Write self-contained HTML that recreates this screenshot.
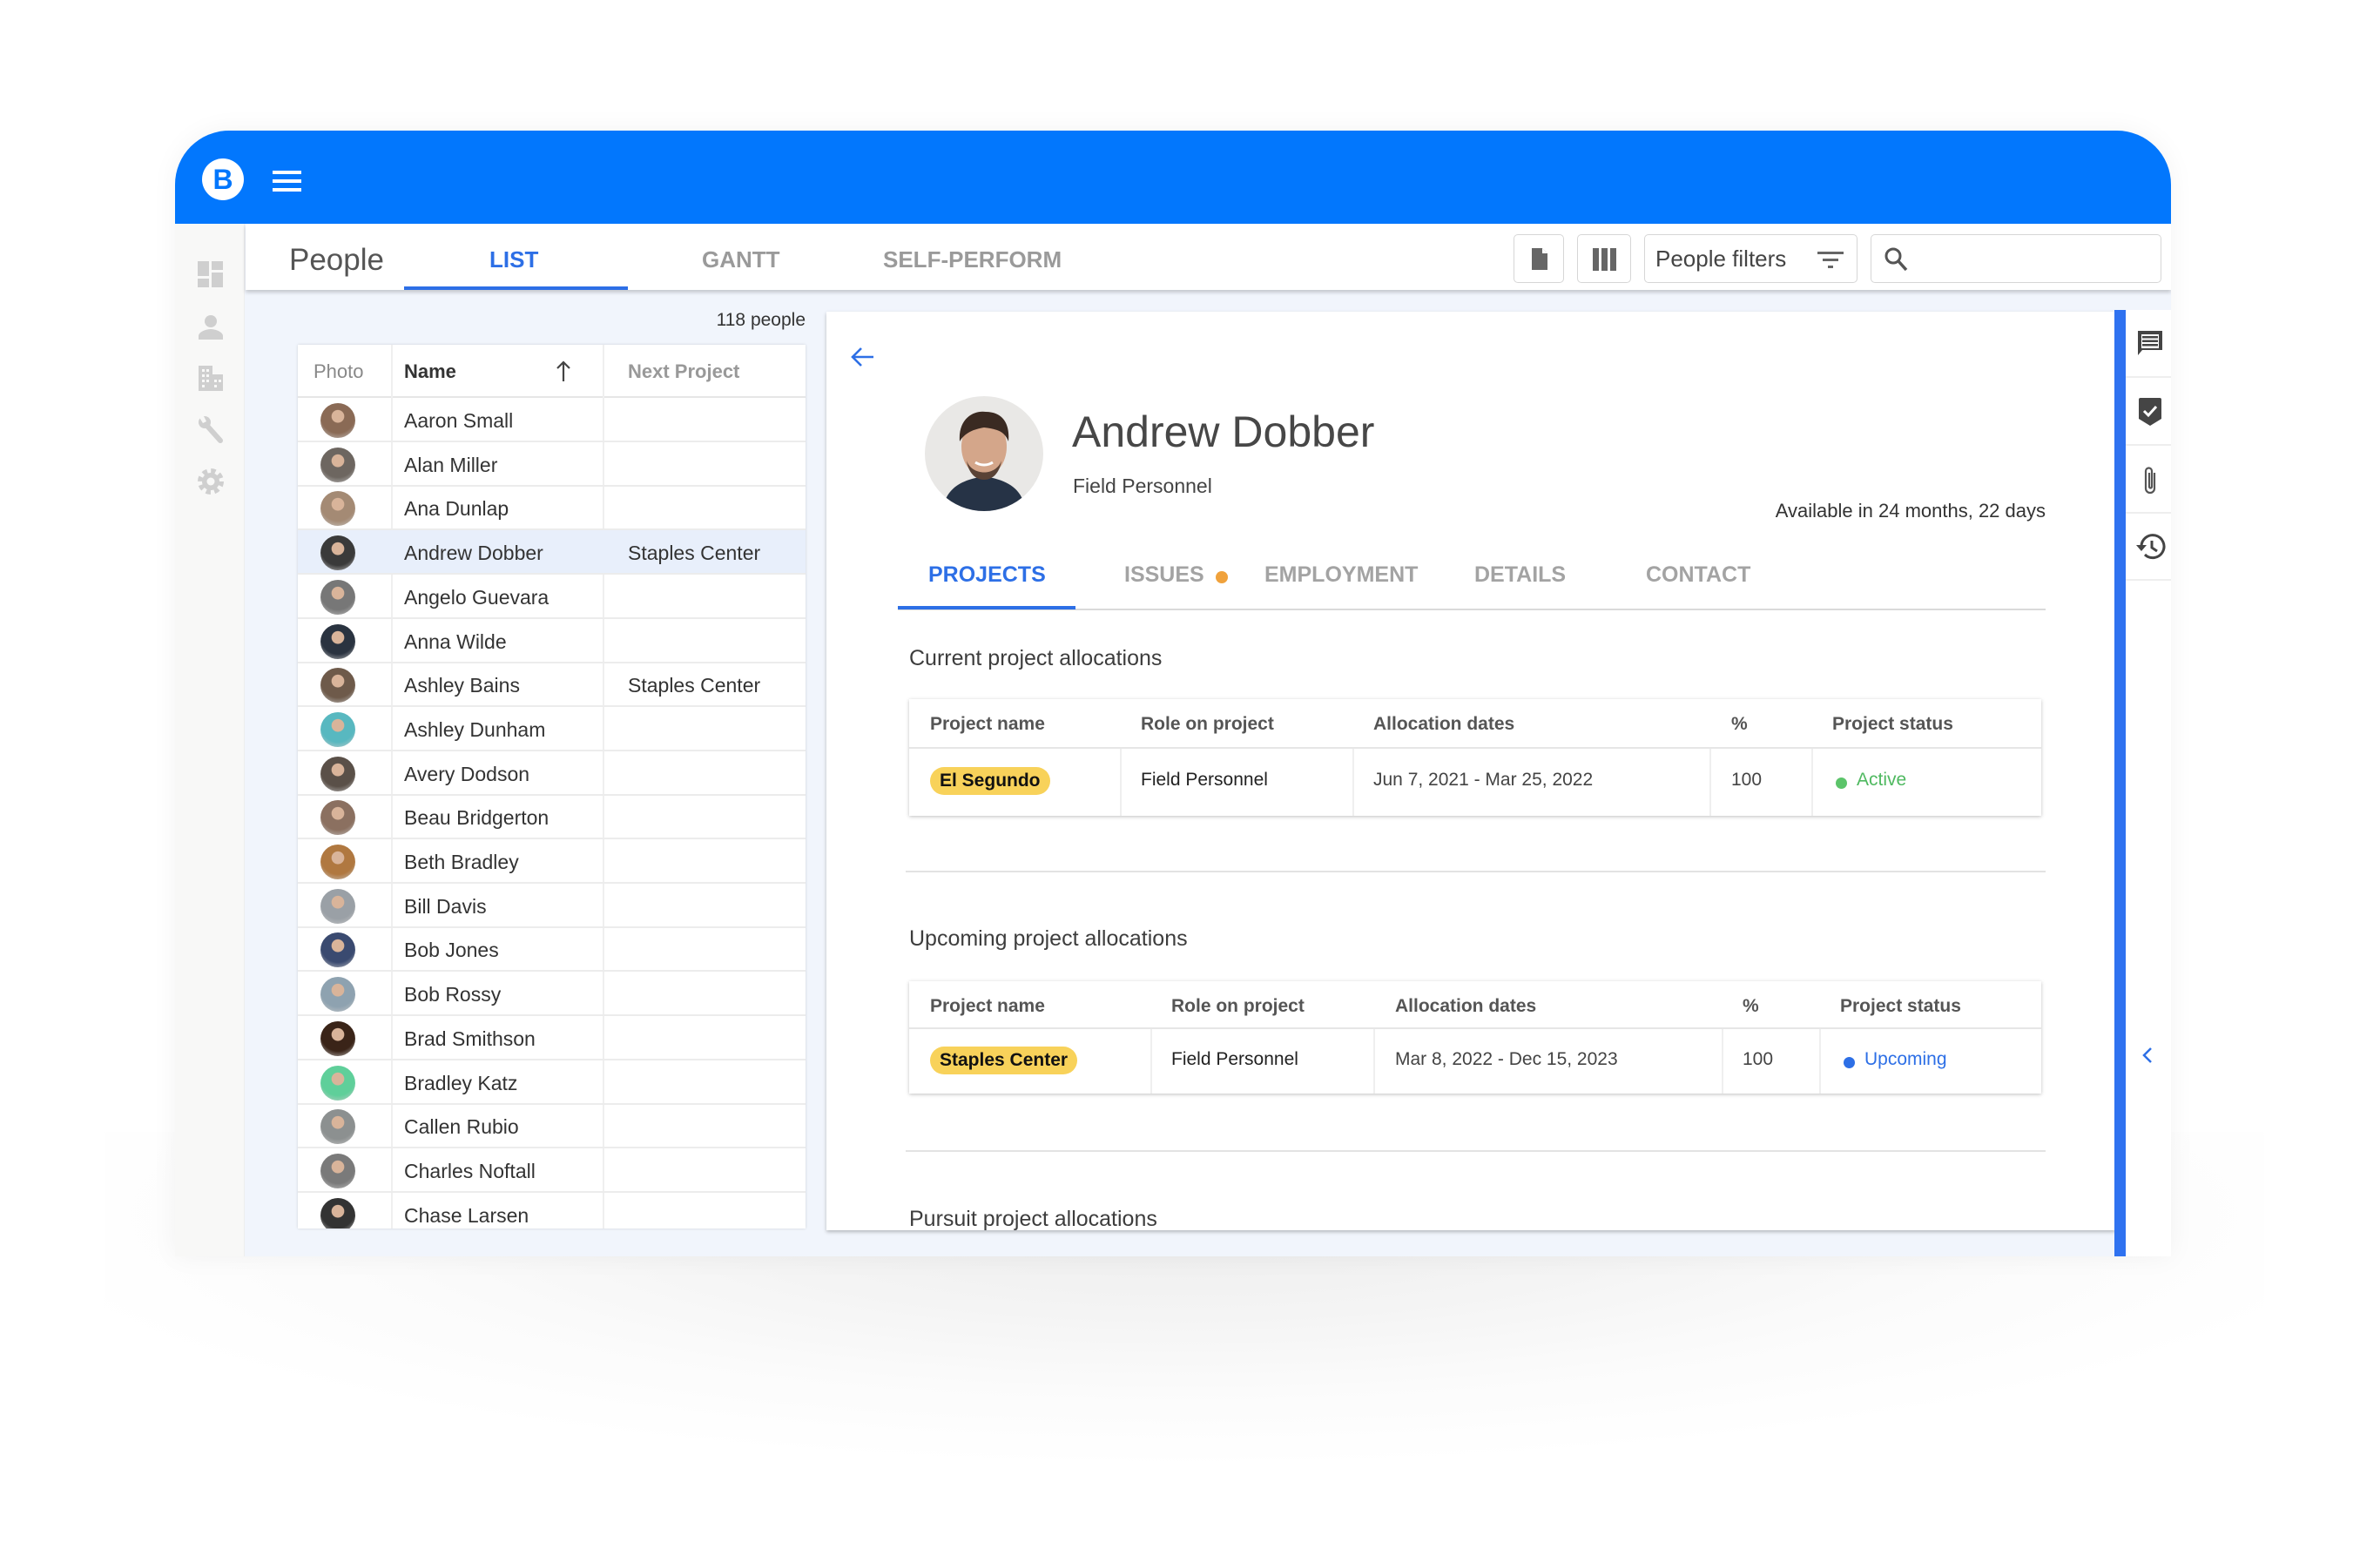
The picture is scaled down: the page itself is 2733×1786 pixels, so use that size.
<!DOCTYPE html>
<html><head><meta charset="utf-8"><style>
*{box-sizing:border-box;margin:0;padding:0}
body{width:2733px;height:1786px;background:#fff;position:relative;overflow:hidden;font-family:"Liberation Sans",Arial,sans-serif;color:#3d3d3d}
.a{position:absolute}
.shadow{left:120px;top:1300px;width:2480px;height:480px;background:radial-gradient(ellipse 55% 60% at 50% 20%,#ededed 0%,#f4f4f4 40%,#fbfbfb 70%,#fff 100%)}
.frame{left:201px;top:150px;width:2292px;height:1293px;background:#f1f5fc;overflow:hidden;border-radius:62px 62px 0 0;box-shadow:0 0 30px rgba(0,0,0,.05)}
.hdr{left:0;top:0;width:100%;height:107px;background:#0277fd}
.side{left:0;top:107px;width:80px;height:1186px;background:#f8f8f7;border-right:1px solid #eee}
.topbar{left:81px;top:107px;width:2211px;height:76px;background:#fff;box-shadow:0 3px 4px rgba(0,0,0,.18)}
.tab{position:absolute;font-size:26px;font-weight:bold;color:#9a9a9a;top:26px}
.btn{position:absolute;top:12px;height:56px;border:1px solid #d6d6d6;border-radius:5px;background:#fff}
.tbl{left:141px;top:246px;width:583px;height:1015px;background:#fff;box-shadow:0 0 3px rgba(0,0,0,.15);overflow:hidden}
.row{position:absolute;left:0;width:583px;height:51px;border-bottom:2px solid #ececec;font-size:23px;color:#333}
.row .n{position:absolute;left:122px;top:13px}
.row .p{position:absolute;left:379px;top:13px}
.av{position:absolute;left:26px;top:6px;width:40px;height:40px;border-radius:50%}
.vl{position:absolute;top:0;width:2px;height:100%;background:#efefef}
.card{left:748px;top:208px;width:1480px;height:1055px;background:#fff;box-shadow:0 2px 4px rgba(0,0,0,.25)}
.ptab{position:absolute;top:288px;font-size:25px;font-weight:bold;color:#a3a3a3}
.sec{position:absolute;left:95px;font-size:25px;color:#3d3d3d}
.pt{position:absolute;background:#fff;box-shadow:0 1px 4px rgba(0,0,0,.25);font-size:21px;width:1300px}
.pt .h{position:absolute;top:17px;font-weight:bold;color:#555}
.pt .c{position:absolute;color:#222}
.chip{position:absolute;background:#f8d25a;border-radius:16px;padding:4px 11px;font-weight:bold;color:#111}
.hr{position:absolute;left:91px;width:1309px;height:2px;background:#e3e3e3}
</style></head><body>
<div class="a shadow"></div>
<div class="a frame">
 <div class="a hdr">
  <div class="a" style="left:31px;top:32px;width:48px;height:48px;border-radius:50%;background:#fff;color:#0277fd;font-weight:bold;font-size:32px;text-align:center;line-height:48px">B</div>
  <div class="a" style="left:112px;top:46px;width:33px;height:4px;background:#fff;box-shadow:0 10px 0 #fff,0 20px 0 #fff"></div>
 </div>
 <div class="a side">
  <svg class="a" style="left:25px;top:42px" width="32" height="280" viewBox="0 0 32 280" fill="#cfcfcf">
   <rect x="1" y="1" width="13" height="17"/><rect x="17" y="1" width="13" height="10"/><rect x="1" y="21" width="13" height="10"/><rect x="17" y="14" width="13" height="17"/>
   <circle cx="16" cy="70" r="7"/><path d="M2 91v-4c0-5 9-8 14-8s14 3 14 8v4z"/>
   <path d="M2 121h16v10h12v19H2z"/><g fill="#f8f8f7"><rect x="6" y="125" width="3" height="3"/><rect x="11" y="125" width="3" height="3"/><rect x="6" y="131" width="3" height="3"/><rect x="11" y="131" width="3" height="3"/><rect x="6" y="137" width="3" height="3"/><rect x="11" y="137" width="3" height="3"/><rect x="6" y="143" width="3" height="3"/><rect x="20" y="137" width="3" height="3"/><rect x="25" y="137" width="3" height="3"/><rect x="20" y="143" width="3" height="3"/></g>
   <path d="M10 188L27 207" stroke="#cfcfcf" stroke-width="6" stroke-linecap="round"/>
   <circle cx="9" cy="186" r="7"/><path d="M2 179l6 0 3 6-4 2z" fill="#f8f8f7"/>
   <circle cx="16" cy="254" r="12" fill="none" stroke="#cfcfcf" stroke-width="6" stroke-dasharray="5.2 4.2"/>
   <circle cx="16" cy="254" r="10"/><circle cx="16" cy="254" r="4.5" fill="#f8f8f7"/>
  </svg>
 </div>
 <div class="a topbar">
  <div class="a" style="left:50px;top:22px;font-size:35px;color:#555">People</div>
  <div class="tab" style="left:280px;color:#2d6fe6">LIST</div>
  <div class="a" style="left:182px;top:72px;width:257px;height:4px;background:#2d6fe6"></div>
  <div class="tab" style="left:524px">GANTT</div>
  <div class="tab" style="left:732px">SELF-PERFORM</div>
  <div class="btn" style="left:1456px;width:58px"><svg class="a" style="left:19px;top:14px" width="20" height="27" viewBox="0 0 20 27"><path d="M1 1h12l6 6v19H1z" fill="#666"/><path d="M13 1v6h6" fill="#fff"/></svg></div>
  <div class="btn" style="left:1529px;width:62px"><svg class="a" style="left:17px;top:15px" width="28" height="26"><rect x="0" y="0" width="7" height="26" fill="#666"/><rect x="10" y="0" width="7" height="26" fill="#666"/><rect x="20" y="0" width="7" height="26" fill="#666"/></svg></div>
  <div class="btn" style="left:1606px;width:245px"><span class="a" style="left:12px;top:12px;font-size:26px;color:#444">People filters</span><svg class="a" style="left:198px;top:19px" width="30" height="20"><rect x="0" y="0" width="30" height="3" fill="#666"/><rect x="6" y="8" width="18" height="3" fill="#666"/><rect x="12" y="16" width="6" height="3" fill="#666"/></svg></div>
  <div class="btn" style="left:1866px;width:334px"><svg class="a" style="left:14px;top:13px" width="30" height="30" viewBox="0 0 30 30"><circle cx="11" cy="11" r="8" fill="none" stroke="#555" stroke-width="3"/><path d="M17 17l9 10" stroke="#555" stroke-width="3.5"/></svg></div>
 </div>
 <div class="a" style="right:1568px;top:206px;font-size:21px;color:#333">118 people</div>
 <div class="a tbl">
  <div class="a" style="left:0;top:0;width:583px;height:61px;border-bottom:2px solid #e6e6e6;font-size:22px">
   <span class="a" style="left:18px;top:18px;color:#888">Photo</span>
   <span class="a" style="left:122px;top:18px;font-weight:bold;color:#333">Name</span>
   <svg class="a" style="left:296px;top:18px" width="18" height="24"><path d="M9 2v22M2 9l7-7 7 7" stroke="#444" stroke-width="2.2" fill="none"/></svg>
   <span class="a" style="left:379px;top:18px;font-weight:bold;color:#999">Next Project</span>
  </div>
  <div class="vl" style="left:107px"></div><div class="vl" style="left:350px"></div>
  <div id="rows"></div>
 </div>
 <div class="a card">
  <svg class="a" style="left:28px;top:40px" width="28" height="24" viewBox="0 0 28 24"><path d="M26 12H3M12 2L2 12l10 10" stroke="#2d6fe6" stroke-width="2.6" fill="none"/></svg>
  <svg class="a" style="left:113px;top:97px" width="136" height="132" viewBox="0 0 136 132"><defs><clipPath id="cp"><ellipse cx="68" cy="66" rx="68" ry="66"/></clipPath></defs><g clip-path="url(#cp)"><rect width="136" height="132" fill="#e9e8e6"/><path d="M20 132c4-28 24-36 48-40 24 4 44 12 48 40z" fill="#263346"/><ellipse cx="68" cy="58" rx="26" ry="34" fill="#d4a68a"/><path d="M40 52c-2-28 18-36 30-34 18 0 28 12 26 34-4-10-10-14-28-16-12 2-22 6-28 16z" fill="#3a2a22"/><path d="M48 74c6 18 34 18 40 0-2 14-10 22-20 22s-18-8-20-22z" fill="#5a4336"/><path d="M58 76c6 4 14 4 20 0" stroke="#fff" stroke-width="3" fill="none"/></g></svg>
  <div class="a" style="left:282px;top:113px;font-size:50px;color:#474747;line-height:1">Andrew Dobber</div>
  <div class="a" style="left:283px;top:187px;font-size:23px;color:#444">Field Personnel</div>
  <div class="a" style="right:80px;top:216px;font-size:22px;color:#333">Available in 24 months, 22 days</div>
  <div class="ptab" style="left:117px;color:#2d6fe6">PROJECTS</div>
  <div class="ptab" style="left:342px">ISSUES</div>
  <div class="a" style="left:447px;top:298px;width:14px;height:14px;border-radius:50%;background:#f0a23c"></div>
  <div class="ptab" style="left:503px">EMPLOYMENT</div>
  <div class="ptab" style="left:744px">DETAILS</div>
  <div class="ptab" style="left:941px">CONTACT</div>
  <div class="a" style="left:82px;top:341px;width:1318px;height:2px;background:#dadada"></div>
  <div class="a" style="left:82px;top:338px;width:204px;height:4px;background:#2d6fe6"></div>
  <div class="sec" style="top:384px">Current project allocations</div>
  <div class="hr" style="top:642px"></div>
  <div class="sec" style="top:706px">Upcoming project allocations</div>
  <div class="hr" style="top:963px"></div>
  <div class="sec" style="top:1028px">Pursuit project allocations</div>
 </div>
 <div class="a" style="left:2227px;top:206px;width:13px;height:1087px;background:#2f72f0"></div>
 <div class="a" style="left:2240px;top:206px;width:52px;height:1087px;background:#fff"></div>
 <div class="a" style="left:2240px;top:282px;width:52px;height:2px;background:#eee;box-shadow:0 78px 0 #eee,0 156px 0 #eee,0 233px 0 #eee"></div>
 <svg class="a" style="left:2252px;top:228px" width="32" height="32" viewBox="0 0 32 32"><path d="M2 2h28v22H7l-5 6z" fill="#444"/><rect x="6" y="6" width="20" height="16" fill="#fff"/><rect x="7" y="8" width="18" height="2.5" fill="#444"/><rect x="7" y="12.5" width="18" height="2.5" fill="#444"/><rect x="7" y="17" width="18" height="2.5" fill="#444"/></svg>
 <svg class="a" style="left:2252px;top:305px" width="32" height="36" viewBox="0 0 32 36"><path d="M3 4q0-2 2-2h22q2 0 2 2v22l-13 8-13-8z" fill="#454545"/><path d="M9 17l5 5 9-10" stroke="#fff" stroke-width="3" fill="none"/></svg>
 <svg class="a" style="left:2258px;top:384px" width="20" height="36" viewBox="0 0 20 36"><path d="M15 9v18a5 5 0 0 1-10 0V7a3.5 3.5 0 0 1 7 0v18a1.5 1.5 0 0 1-3 0V9" stroke="#555" stroke-width="2.2" fill="none"/></svg>
 <svg class="a" style="left:2250px;top:462px" width="36" height="32" viewBox="0 0 36 32"><path d="M8 16a13 13 0 1 1 4 9" stroke="#444" stroke-width="3" fill="none"/><path d="M2 14l6 7 6-7z" fill="#444"/><path d="M20 9v8l6 4" stroke="#444" stroke-width="3" fill="none"/></svg>
 <svg class="a" style="left:2258px;top:1052px" width="14" height="20"><path d="M11 2L3 10l8 8" stroke="#2d6fe6" stroke-width="2.5" fill="none"/></svg>
</div>
<div class="a pt" style="left:1044px;top:803px;height:134px">
 <div style="position:absolute;left:0;top:55px;width:100%;height:2px;background:#e6e6e6"></div>
 <div class="vl" style="left:242px;top:57px;height:77px"></div><div class="vl" style="left:509px;top:57px;height:77px"></div><div class="vl" style="left:919px;top:57px;height:77px"></div><div class="vl" style="left:1036px;top:57px;height:77px"></div>
 <span class="h" style="left:24px">Project name</span><span class="h" style="left:266px">Role on project</span><span class="h" style="left:533px">Allocation dates</span><span class="h" style="left:944px">%</span><span class="h" style="left:1060px">Project status</span>
 <span class="chip" style="left:24px;top:78px">El Segundo</span>
 <span class="c" style="left:266px;top:81px">Field Personnel</span><span class="c" style="left:533px;top:81px;color:#444">Jun 7, 2021 - Mar 25, 2022</span><span class="c" style="left:944px;top:81px;color:#444">100</span>
 <span class="a" style="left:1064px;top:90px;width:13px;height:13px;border-radius:50%;background:#5cc46a"></span><span class="c" style="left:1088px;top:81px;color:#4fb960">Active</span>
</div>
<div class="a pt" style="left:1044px;top:1127px;height:129px">
 <div style="position:absolute;left:0;top:53px;width:100%;height:2px;background:#e6e6e6"></div>
 <div class="vl" style="left:277px;top:55px;height:74px"></div><div class="vl" style="left:533px;top:55px;height:74px"></div><div class="vl" style="left:933px;top:55px;height:74px"></div><div class="vl" style="left:1045px;top:55px;height:74px"></div>
 <span class="h" style="left:24px">Project name</span><span class="h" style="left:301px">Role on project</span><span class="h" style="left:558px">Allocation dates</span><span class="h" style="left:957px">%</span><span class="h" style="left:1069px">Project status</span>
 <span class="chip" style="left:24px;top:75px">Staples Center</span>
 <span class="c" style="left:301px;top:78px">Field Personnel</span><span class="c" style="left:558px;top:78px;color:#444">Mar 8, 2022 - Dec 15, 2023</span><span class="c" style="left:957px;top:78px;color:#444">100</span>
 <span class="a" style="left:1073px;top:87px;width:13px;height:13px;border-radius:50%;background:#2d6fe6"></span><span class="c" style="left:1097px;top:78px;color:#2d6fe6">Upcoming</span>
</div>
<script>
var names=["Aaron Small","Alan Miller","Ana Dunlap","Andrew Dobber","Angelo Guevara","Anna Wilde","Ashley Bains","Ashley Dunham","Avery Dodson","Beau Bridgerton","Beth Bradley","Bill Davis","Bob Jones","Bob Rossy","Brad Smithson","Bradley Katz","Callen Rubio","Charles Noftall","Chase Larsen"];
var cols=["#8a6a55","#6d6660","#a48a74","#3a3a3a","#777","#2a3340","#6e5a4a","#58b8c0","#5a5048","#8b7060","#b07840","#9aa0a6","#3a4a70","#8ea2b0","#3a2418","#5fcf9a","#8c9090","#7a7a7a","#333"];
var h="";
for(var i=0;i<names.length;i++){var t=61+i*50.7;var bg=i==3?"background:#e8effb;":"";
h+='<div class="row" style="top:'+t+'px;'+bg+'"><div class="av" style="background:radial-gradient(circle at 50% 38%,#d9b49a 0 22%,'+cols[i]+' 24%,'+cols[i]+' 60%,#ccc 100%)"></div><span class="n">'+names[i]+'</span>'+((i==3||i==6)?'<span class="p">Staples Center</span>':'')+'</div>';}
document.getElementById("rows").innerHTML=h;
</script>
</body></html>
